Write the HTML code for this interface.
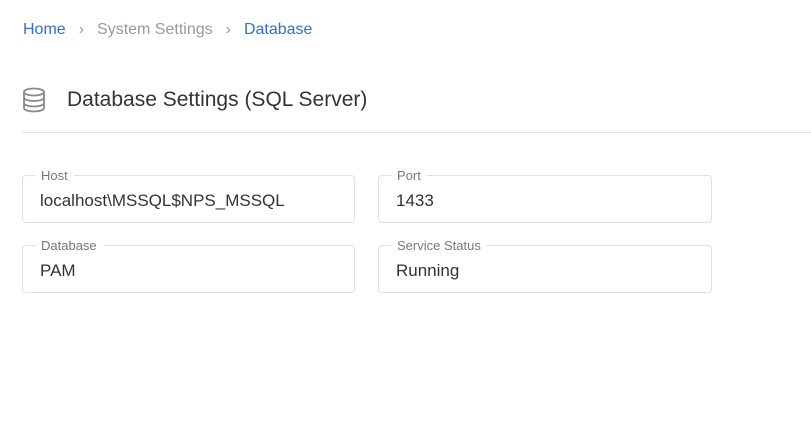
<!DOCTYPE html>
<html><head><style>
body{margin:0;width:811px;height:422px;background:#fff;font-family:"Liberation Sans",sans-serif;position:relative;overflow:hidden}
.bc{position:absolute;left:23px;top:21px;font-size:16px;color:#999}
.bc .l{color:#2f72c4}
.bc .s{margin:0 13px;color:#999}
.ttl{position:absolute;left:67px;top:88px;font-size:21px;color:#333}
.hr{position:absolute;left:22px;right:0;top:132px;border-top:1px solid #e3e3e3}
.f{position:absolute;width:333px;height:48px;border:1px solid #e0e0e0;border-radius:4px;box-sizing:border-box}
.f .lg{position:absolute;left:12px;top:-8px;background:#fff;padding:0 6px;font-size:13px;color:#777}
.f .v{position:absolute;left:17px;top:15px;font-size:17px;color:#333}
</style></head><body>
<div class="bc"><span class="l">Home</span><span class="s">›</span>System Settings<span class="s">›</span><span class="l">Database</span></div>
<svg style="position:absolute;left:22px;top:87px" width="24" height="26" viewBox="0 0 24 26" fill="none" stroke="#888" stroke-width="1.8"><ellipse cx="12" cy="5" rx="10" ry="3.5"/><path d="M2 5v16c0 2 4.5 3.5 10 3.5s10-1.5 10-3.5V5M2 10.5c0 2 4.5 3.5 10 3.5s10-1.5 10-3.5M2 16c0 2 4.5 3.5 10 3.5s10-1.5 10-3.5"/></svg>
<div class="ttl">Database Settings (SQL Server)</div>
<div class="hr"></div>
<div class="f" style="left:22px;top:175px"><span class="lg">Host</span><span class="v">localhost\MSSQL$NPS_MSSQL</span></div>
<div class="f" style="left:378px;top:175px;width:334px"><span class="lg">Port</span><span class="v">1433</span></div>
<div class="f" style="left:22px;top:245px"><span class="lg">Database</span><span class="v">PAM</span></div>
<div class="f" style="left:378px;top:245px;width:334px"><span class="lg">Service Status</span><span class="v">Running</span></div>
</body></html>
